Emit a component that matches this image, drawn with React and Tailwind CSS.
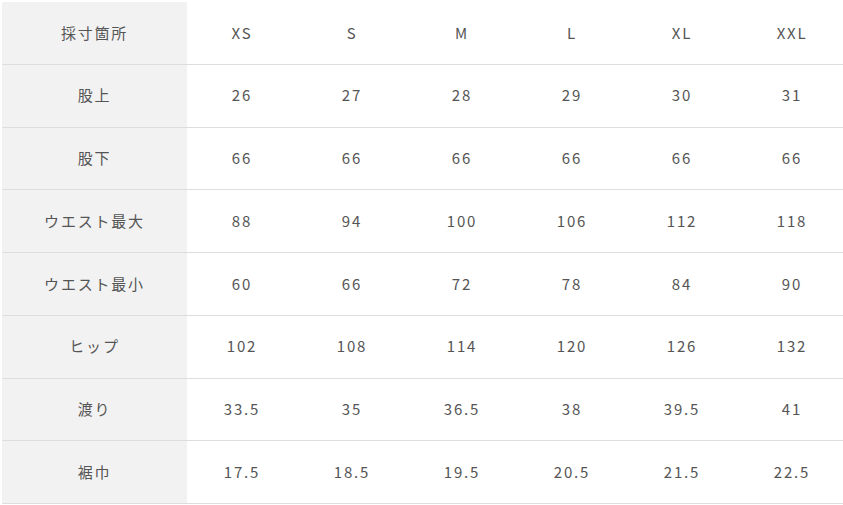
const sizes = ["XS", "S", "M", "L", "XL", "XXL"];

const rows = [
  { label: "股上", values: ["26", "27", "28", "29", "30", "31"] },
  { label: "股下", values: ["66", "66", "66", "66", "66", "66"] },
  { label: "ウエスト最大", values: ["88", "94", "100", "106", "112", "118"] },
  { label: "ウエスト最小", values: ["60", "66", "72", "78", "84", "90"] },
  { label: "ヒップ", values: ["102", "108", "114", "120", "126", "132"] },
  { label: "渡り", values: ["33.5", "35", "36.5", "38", "39.5", "41"] },
  { label: "裾巾", values: ["17.5", "18.5", "19.5", "20.5", "21.5", "22.5"] },
];

const Row = ({ label, values }) => (
  <div className="flex h-[62.75px] border-b border-[#dddddd]">
    <div className="w-[185px] shrink-0 flex items-center justify-center bg-[#f2f2f2]">
      {label}
    </div>
    {values.map((v, i) => (
      <div key={i} className="w-[110px] shrink-0 flex items-center justify-center">
        {v}
      </div>
    ))}
  </div>
);

export default function App() {
  return (
    <div
      className="w-[843px] h-[505px] overflow-hidden bg-white pl-[2px] pt-[2px] text-[15px] tracking-[0.12em] text-[#555]"
      style={{ fontFamily: '"Noto Sans CJK JP", "Noto Sans", sans-serif' }}
    >
      <div className="w-[845px]">
        <Row label="採寸箇所" values={sizes} />
        {rows.map((r) => (
          <Row key={r.label} label={r.label} values={r.values} />
        ))}
      </div>
    </div>
  );
}
